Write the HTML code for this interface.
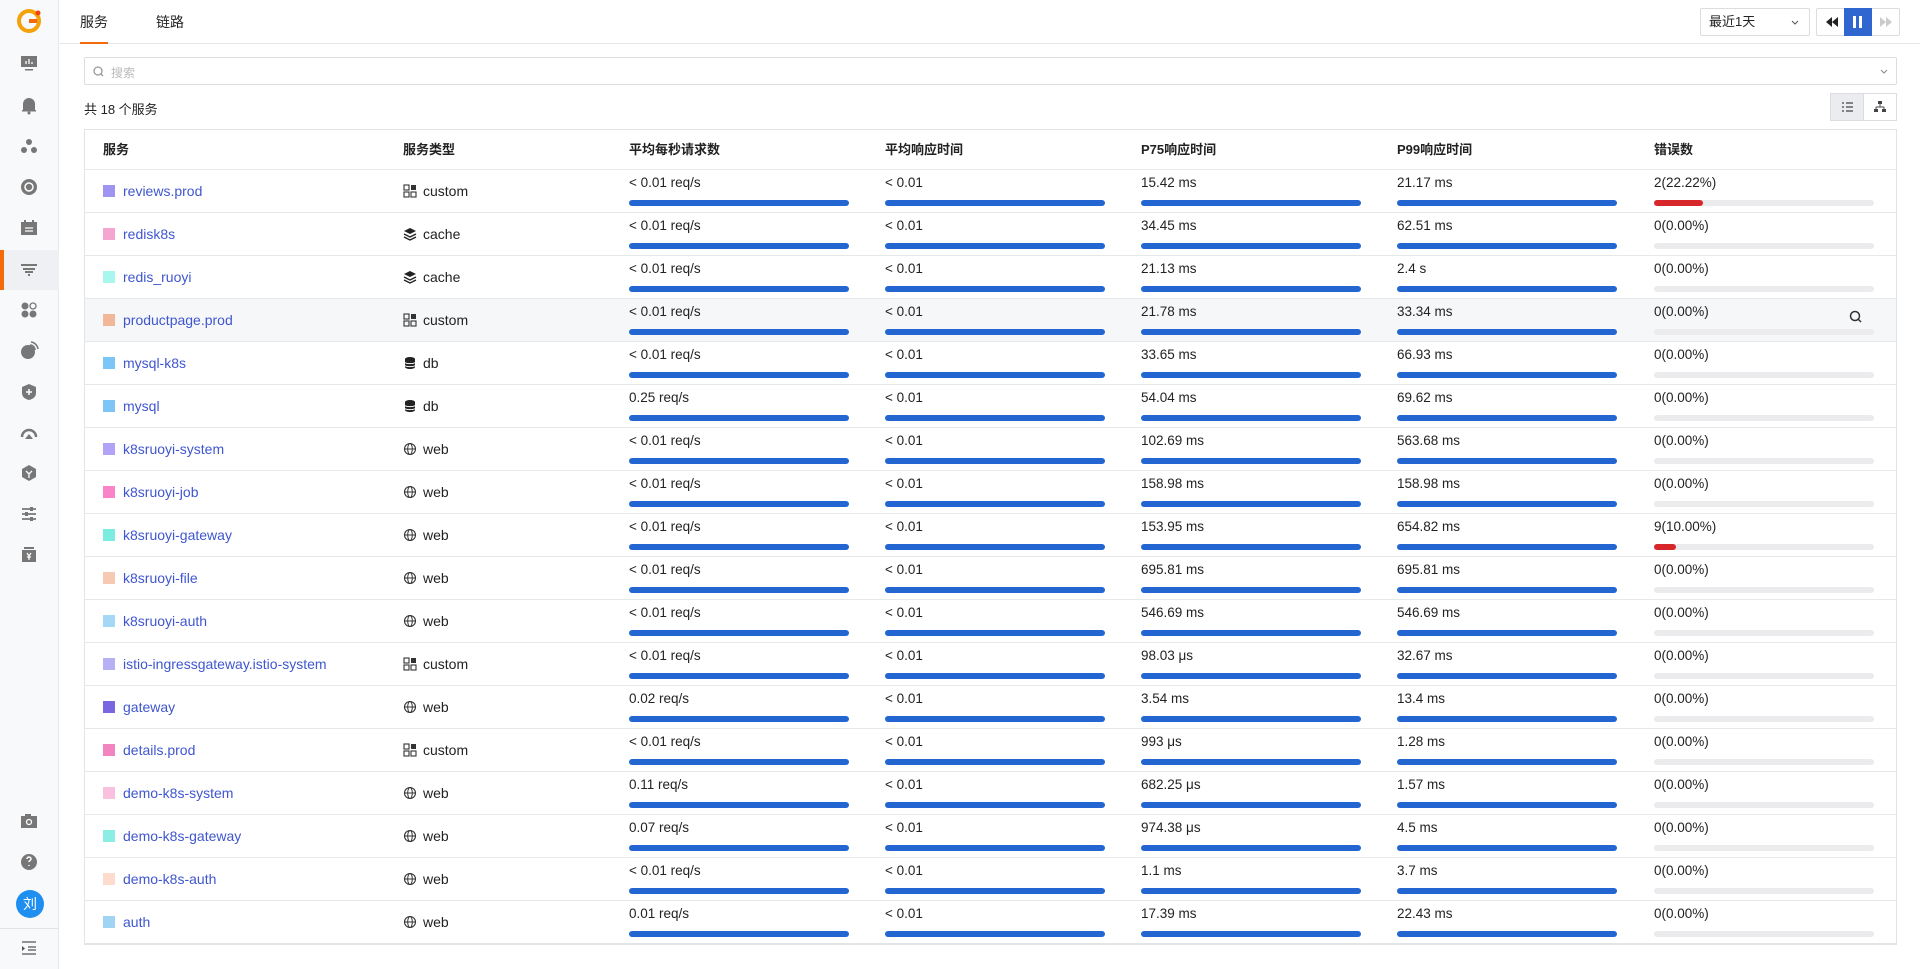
<!DOCTYPE html>
<html><head><meta charset="utf-8"><style>
*{box-sizing:border-box;margin:0;padding:0}
body{width:1920px;height:969px;overflow:hidden;background:#fff;font-family:"Liberation Sans","Noto Sans CJK SC",sans-serif;font-size:14px;color:#222;position:relative}
.sb{position:absolute;left:0;top:0;width:59px;height:969px;background:#f8f9fb;border-right:1px solid #e6e7ea}
.ic{position:absolute;left:19px;width:20px;height:20px}
.act{position:absolute;left:0;top:250px;width:59px;height:40px;background:#eef0f3}
.act:before{content:"";position:absolute;left:0;top:0;width:4px;height:40px;background:#f46a0a}
.hdr{position:absolute;left:60px;top:0;right:0;height:44px;border-bottom:1px solid #e6e7ea}
.tab{position:absolute;top:12px;font-size:14px}
.ul{position:absolute;left:80px;top:42px;width:28px;height:2px;background:#f46a0a}
.sel{position:absolute;left:1700px;top:8px;width:110px;height:28px;border:1px solid #dcdde0;border-radius:2px;font-size:13px;line-height:26px;padding:0 8px}
.btns{position:absolute;left:1816px;top:8px;width:84px;height:28px;border:1px solid #dcdde0;border-radius:2px}
.search{position:absolute;left:84px;top:57px;width:1813px;height:28px;border:1px solid #dcdde0;border-radius:2px}
.cnt{position:absolute;left:84px;top:99px;font-size:13px}
.vt{position:absolute;left:1830px;top:93px;width:67px;height:28px;border:1px solid #dcdde0}
.tbl{position:absolute;left:84px;top:129px;width:1813px;height:816px;border:1px solid #e3e4e7;border-bottom:2px solid #e3e4e7}
.th{position:relative;height:40px;border-bottom:1px solid #e8e8ea;font-weight:bold;font-size:13px}
.th span{position:absolute;top:9px}
.r{position:relative;height:43px;border-bottom:1px solid #e8e8ea}
.r:last-child{border-bottom:none}
.n{position:absolute;left:18px;top:13px;color:#3f56cf;white-space:nowrap}
.n i{display:inline-block;width:12px;height:12px;vertical-align:-1px;margin-right:8px}
.t{position:absolute;left:318px;top:13px}
.t svg{vertical-align:-2px;margin-right:6px}
.m{position:absolute;top:5px;width:220px}
.m b{display:block;font-weight:normal;height:20px;font-size:13.5px}
.m u{display:block;height:6px;border-radius:3px;background:#2366d1;margin-top:5px}
.e u{background:#ebebee;position:relative}
.e u s{position:absolute;left:0;top:0;height:6px;border-radius:3px;background:#d7272a}
.c1{left:544px}.c2{left:800px}.c3{left:1056px}.c4{left:1312px}.c5{left:1569px}
</style></head><body>
<div class="sb">
<svg class="ic" style="left:17px;top:8px;width:26px;height:26px" viewBox="0 0 26 26"><circle cx="12" cy="13" r="10" fill="none" stroke="#f5a20a" stroke-width="4"/><path d="M12 13h8" stroke="#f46a0a" stroke-width="4"/><circle cx="21" cy="5" r="2.5" fill="#f4400a"/></svg>
<svg class="ic" style="top:53px" viewBox="0 0 20 20"><rect x="2" y="3" width="16" height="11" fill="#777"/><rect x="6" y="16" width="8" height="1.5" fill="#777"/><path d="M7 11V8M10 11V6M13 11V9" stroke="#fff" stroke-width="1.3"/></svg>
<svg class="ic" style="top:95px" viewBox="0 0 20 20"><path d="M4 15V9a6 6 0 0112 0v6zM3 15h14v1.5H3z" fill="#777"/><circle cx="10" cy="18" r="1.5" fill="#777"/></svg>
<svg class="ic" style="top:136px" viewBox="0 0 20 20"><circle cx="10" cy="6" r="3" fill="#777"/><circle cx="5" cy="14" r="3" fill="#777"/><circle cx="15" cy="14" r="3" fill="#777"/></svg>
<svg class="ic" style="top:177px" viewBox="0 0 20 20"><circle cx="10" cy="10" r="8" fill="#777"/><circle cx="10" cy="10" r="4" fill="none" stroke="#fff" stroke-width="1.5"/></svg>
<svg class="ic" style="top:218px" viewBox="0 0 20 20"><rect x="2" y="4" width="16" height="13" fill="#777"/><path d="M6 2v4M14 2v4" stroke="#777" stroke-width="2"/><path d="M6 10h8M6 13h8" stroke="#fff" stroke-width="1.3"/></svg>
<div class="act"></div>
<svg class="ic" style="top:260px" viewBox="0 0 20 20"><path d="M2 5h16M4 9h12M6 12h8M9 15h2" stroke="#666" stroke-width="1.8"/></svg>
<svg class="ic" style="top:300px" viewBox="0 0 20 20"><circle cx="6" cy="6" r="3.5" fill="#777"/><circle cx="14" cy="6" r="3" fill="none" stroke="#777" stroke-width="1.3"/><circle cx="6" cy="14" r="3.5" fill="#777"/><circle cx="14" cy="14" r="3.5" fill="#777"/></svg>
<svg class="ic" style="top:341px" viewBox="0 0 20 20"><circle cx="9" cy="11" r="7" fill="#777"/><path d="M11 4a5 5 0 015 5M12 1a8 8 0 017 7" stroke="#777" fill="none" stroke-width="1.5"/></svg>
<svg class="ic" style="top:382px" viewBox="0 0 20 20"><path d="M10 2l7 3v6c0 4-3 6-7 7-4-1-7-3-7-7V5z" fill="#777"/><path d="M10 7v6M7 10h6" stroke="#fff" stroke-width="1.5"/></svg>
<svg class="ic" style="top:423px" viewBox="0 0 20 20"><path d="M3 14a7 7 0 1114 0" stroke="#777" stroke-width="2.5" fill="none"/><path d="M10 11l4 5H6z" fill="#777"/></svg>
<svg class="ic" style="top:463px" viewBox="0 0 20 20"><path d="M10 2l7 4v8l-7 4-7-4V6z" fill="#777"/><path d="M7 8l3 3 3-3M10 11v4" stroke="#fff" stroke-width="1.3" fill="none"/></svg>
<svg class="ic" style="top:504px" viewBox="0 0 20 20"><path d="M3 5h14M3 10h14M3 15h14" stroke="#777" stroke-width="1.8"/><rect x="11" y="3" width="3" height="4" fill="#777"/><rect x="6" y="8" width="3" height="4" fill="#777"/><rect x="11" y="13" width="3" height="4" fill="#777"/></svg>
<svg class="ic" style="top:545px" viewBox="0 0 20 20"><rect x="3" y="5" width="14" height="12" fill="#777"/><rect x="5" y="2" width="10" height="2" fill="#777"/><path d="M8 8l2 3 2-3M10 11v4M8 12h4" stroke="#fff" stroke-width="1.2" fill="none"/></svg>
<svg class="ic" style="top:811px" viewBox="0 0 20 20"><rect x="2" y="5" width="16" height="12" fill="#777"/><rect x="6" y="3" width="6" height="3" fill="#777"/><circle cx="10" cy="11" r="2.5" fill="none" stroke="#fff" stroke-width="1.3"/></svg>
<svg class="ic" style="top:852px" viewBox="0 0 20 20"><circle cx="10" cy="10" r="8" fill="#777"/><path d="M8 7a2 2 0 114 0c0 1.5-2 1.5-2 3M10 13v1" stroke="#fff" stroke-width="1.5" fill="none"/></svg>
<div style="position:absolute;left:16px;top:890px;width:28px;height:28px;border-radius:50%;background:#1e8ff0;color:#fff;font-size:14px;text-align:center;line-height:28px">刘</div>
<div style="position:absolute;left:0;top:928px;width:59px;border-top:1px solid #e3e4e7"></div>
<svg class="ic" style="top:938px" viewBox="0 0 20 20"><path d="M3 4h14M9 9h8M9 12h8M3 16h14" stroke="#555" stroke-width="1.3"/><path d="M3 8l3 2.5L3 13z" fill="#555"/></svg>
</div>
<div class="hdr"></div>
<div class="tab" style="left:80px">服务</div>
<div class="tab" style="left:156px">链路</div>
<div class="ul"></div>
<div class="sel">最近1天<svg style="position:absolute;right:10px;top:11px" width="8" height="5" viewBox="0 0 8 5"><path d="M1 1l3 3 3-3" stroke="#555" fill="none"/></svg></div>
<div class="btns"><svg style="position:absolute;left:8px;top:8px" width="14" height="10" viewBox="0 0 14 10"><path d="M7 0v10L1 5zM13 0v10L7 5z" fill="#222"/></svg><div style="position:absolute;left:27px;top:-1px;width:28px;height:28px;background:#2f66d0"><div style="position:absolute;left:9px;top:8px;width:3px;height:12px;background:#fff"></div><div style="position:absolute;left:15px;top:8px;width:3px;height:12px;background:#fff"></div></div><svg style="position:absolute;left:62px;top:8px" width="14" height="10" viewBox="0 0 14 10"><path d="M1 0v10l6-5zM7 0v10l6-5z" fill="#ccc"/></svg></div>
<div class="search"><svg style="position:absolute;left:8px;top:8px" width="11" height="11" viewBox="0 0 11 11"><circle cx="5" cy="5" r="4" fill="none" stroke="#999" stroke-width="1.3"/><path d="M8 8l2 2" stroke="#999" stroke-width="1.3"/></svg><span style="position:absolute;left:26px;top:6px;font-size:12px;color:#bbb">搜索</span><svg style="position:absolute;right:8px;top:11px" width="8" height="5" viewBox="0 0 8 5"><path d="M1 1l3 3 3-3" stroke="#888" fill="none"/></svg></div>
<div class="cnt">共 18 个服务</div>
<div class="vt"><div style="position:absolute;left:0;top:0;width:33px;height:26px;background:#ebecef;border-right:1px solid #dcdde0"></div><svg style="position:absolute;left:11px;top:8px" width="11" height="10" viewBox="0 0 11 10"><path d="M0 1h2M4 1h7M0 5h2M4 5h7M0 9h2M4 9h7" stroke="#444" stroke-width="1.2"/></svg><svg style="position:absolute;left:43px;top:7px" width="12" height="11" viewBox="0 0 12 11"><rect x="4" y="0" width="4" height="3" fill="#444"/><path d="M6 3v3M2 6h8M2 6v2M10 6v2" stroke="#444"/><rect x="0" y="8" width="4" height="3" fill="#444"/><rect x="8" y="8" width="4" height="3" fill="#444"/></svg></div>
<svg width="0" height="0" style="position:absolute"><defs>
<g id="cu"><rect x="1" y="1" width="5" height="5" fill="none" stroke="#333" stroke-width="1.1"/><rect x="8" y="1" width="5" height="5" fill="#333"/><rect x="1" y="8" width="5" height="5" fill="none" stroke="#333" stroke-width="1.1"/><rect x="8" y="8" width="5" height="5" fill="none" stroke="#333" stroke-width="1.1"/></g>
<g id="ca"><path d="M7 1l6 3-6 3-6-3z" fill="#222"/><path d="M1 7l6 3 6-3M1 10l6 3 6-3" stroke="#222" stroke-width="1.4" fill="none"/></g>
<g id="db"><ellipse cx="7" cy="3" rx="5" ry="2" fill="#222"/><path d="M2 3v8c0 1 2 2 5 2s5-1 5-2V3" fill="#222"/><path d="M2 6.5c1 1.5 9 1.5 10 0M2 9.5c1 1.5 9 1.5 10 0" stroke="#fff" fill="none"/></g>
<g id="we"><circle cx="7" cy="7" r="5.5" fill="none" stroke="#333" stroke-width="1.1"/><ellipse cx="7" cy="7" rx="2.3" ry="5.5" fill="none" stroke="#333" stroke-width="1"/><path d="M1.5 7h11" stroke="#333"/></g>
</defs></svg>
<div class="tbl">
<div class="th"><span style="left:18px">服务</span><span style="left:318px">服务类型</span><span style="left:544px">平均每秒请求数</span><span style="left:800px">平均响应时间</span><span style="left:1056px">P75响应时间</span><span style="left:1312px">P99响应时间</span><span style="left:1569px">错误数</span></div>
<div class="r"><div class="n"><i style="background:#a094f2"></i>reviews.prod</div><div class="t"><svg width="14" height="14"><use href="#cu"/></svg>custom</div><div class="m c1"><b>&lt; 0.01 req/s</b><u></u></div><div class="m c2"><b>&lt; 0.01</b><u></u></div><div class="m c3"><b>15.42 ms</b><u></u></div><div class="m c4"><b>21.17 ms</b><u></u></div><div class="m c5 e"><b>2(22.22%)</b><u><s style="width:49px"></s></u></div></div>
<div class="r"><div class="n"><i style="background:#f2a6d0"></i>redisk8s</div><div class="t"><svg width="14" height="14"><use href="#ca"/></svg>cache</div><div class="m c1"><b>&lt; 0.01 req/s</b><u></u></div><div class="m c2"><b>&lt; 0.01</b><u></u></div><div class="m c3"><b>34.45 ms</b><u></u></div><div class="m c4"><b>62.51 ms</b><u></u></div><div class="m c5 e"><b>0(0.00%)</b><u></u></div></div>
<div class="r"><div class="n"><i style="background:#a8f7ef"></i>redis_ruoyi</div><div class="t"><svg width="14" height="14"><use href="#ca"/></svg>cache</div><div class="m c1"><b>&lt; 0.01 req/s</b><u></u></div><div class="m c2"><b>&lt; 0.01</b><u></u></div><div class="m c3"><b>21.13 ms</b><u></u></div><div class="m c4"><b>2.4 s</b><u></u></div><div class="m c5 e"><b>0(0.00%)</b><u></u></div></div>
<div class="r" style="background:#f6f7f9"><div class="n"><i style="background:#f2b699"></i>productpage.prod</div><div class="t"><svg width="14" height="14"><use href="#cu"/></svg>custom</div><div class="m c1"><b>&lt; 0.01 req/s</b><u></u></div><div class="m c2"><b>&lt; 0.01</b><u></u></div><div class="m c3"><b>21.78 ms</b><u></u></div><div class="m c4"><b>33.34 ms</b><u></u></div><div class="m c5 e"><b>0(0.00%)</b><u></u></div><svg style="position:absolute;left:1764px;top:11px" width="14" height="14" viewBox="0 0 14 14"><circle cx="6" cy="6" r="4.5" fill="none" stroke="#333" stroke-width="1.5"/><path d="M9.5 9.5l2.5 2.5" stroke="#333" stroke-width="1.5"/></svg></div>
<div class="r"><div class="n"><i style="background:#7cc5f7"></i>mysql-k8s</div><div class="t"><svg width="14" height="14"><use href="#db"/></svg>db</div><div class="m c1"><b>&lt; 0.01 req/s</b><u></u></div><div class="m c2"><b>&lt; 0.01</b><u></u></div><div class="m c3"><b>33.65 ms</b><u></u></div><div class="m c4"><b>66.93 ms</b><u></u></div><div class="m c5 e"><b>0(0.00%)</b><u></u></div></div>
<div class="r"><div class="n"><i style="background:#7cc5f7"></i>mysql</div><div class="t"><svg width="14" height="14"><use href="#db"/></svg>db</div><div class="m c1"><b>0.25 req/s</b><u></u></div><div class="m c2"><b>&lt; 0.01</b><u></u></div><div class="m c3"><b>54.04 ms</b><u></u></div><div class="m c4"><b>69.62 ms</b><u></u></div><div class="m c5 e"><b>0(0.00%)</b><u></u></div></div>
<div class="r"><div class="n"><i style="background:#b3a3f7"></i>k8sruoyi-system</div><div class="t"><svg width="14" height="14"><use href="#we"/></svg>web</div><div class="m c1"><b>&lt; 0.01 req/s</b><u></u></div><div class="m c2"><b>&lt; 0.01</b><u></u></div><div class="m c3"><b>102.69 ms</b><u></u></div><div class="m c4"><b>563.68 ms</b><u></u></div><div class="m c5 e"><b>0(0.00%)</b><u></u></div></div>
<div class="r"><div class="n"><i style="background:#f985c8"></i>k8sruoyi-job</div><div class="t"><svg width="14" height="14"><use href="#we"/></svg>web</div><div class="m c1"><b>&lt; 0.01 req/s</b><u></u></div><div class="m c2"><b>&lt; 0.01</b><u></u></div><div class="m c3"><b>158.98 ms</b><u></u></div><div class="m c4"><b>158.98 ms</b><u></u></div><div class="m c5 e"><b>0(0.00%)</b><u></u></div></div>
<div class="r"><div class="n"><i style="background:#7aede0"></i>k8sruoyi-gateway</div><div class="t"><svg width="14" height="14"><use href="#we"/></svg>web</div><div class="m c1"><b>&lt; 0.01 req/s</b><u></u></div><div class="m c2"><b>&lt; 0.01</b><u></u></div><div class="m c3"><b>153.95 ms</b><u></u></div><div class="m c4"><b>654.82 ms</b><u></u></div><div class="m c5 e"><b>9(10.00%)</b><u><s style="width:22px"></s></u></div></div>
<div class="r"><div class="n"><i style="background:#f7c9b3"></i>k8sruoyi-file</div><div class="t"><svg width="14" height="14"><use href="#we"/></svg>web</div><div class="m c1"><b>&lt; 0.01 req/s</b><u></u></div><div class="m c2"><b>&lt; 0.01</b><u></u></div><div class="m c3"><b>695.81 ms</b><u></u></div><div class="m c4"><b>695.81 ms</b><u></u></div><div class="m c5 e"><b>0(0.00%)</b><u></u></div></div>
<div class="r"><div class="n"><i style="background:#a5d8f7"></i>k8sruoyi-auth</div><div class="t"><svg width="14" height="14"><use href="#we"/></svg>web</div><div class="m c1"><b>&lt; 0.01 req/s</b><u></u></div><div class="m c2"><b>&lt; 0.01</b><u></u></div><div class="m c3"><b>546.69 ms</b><u></u></div><div class="m c4"><b>546.69 ms</b><u></u></div><div class="m c5 e"><b>0(0.00%)</b><u></u></div></div>
<div class="r"><div class="n"><i style="background:#b8b0f5"></i>istio-ingressgateway.istio-system</div><div class="t"><svg width="14" height="14"><use href="#cu"/></svg>custom</div><div class="m c1"><b>&lt; 0.01 req/s</b><u></u></div><div class="m c2"><b>&lt; 0.01</b><u></u></div><div class="m c3"><b>98.03 μs</b><u></u></div><div class="m c4"><b>32.67 ms</b><u></u></div><div class="m c5 e"><b>0(0.00%)</b><u></u></div></div>
<div class="r"><div class="n"><i style="background:#7a66e0"></i>gateway</div><div class="t"><svg width="14" height="14"><use href="#we"/></svg>web</div><div class="m c1"><b>0.02 req/s</b><u></u></div><div class="m c2"><b>&lt; 0.01</b><u></u></div><div class="m c3"><b>3.54 ms</b><u></u></div><div class="m c4"><b>13.4 ms</b><u></u></div><div class="m c5 e"><b>0(0.00%)</b><u></u></div></div>
<div class="r"><div class="n"><i style="background:#f285c0"></i>details.prod</div><div class="t"><svg width="14" height="14"><use href="#cu"/></svg>custom</div><div class="m c1"><b>&lt; 0.01 req/s</b><u></u></div><div class="m c2"><b>&lt; 0.01</b><u></u></div><div class="m c3"><b>993 μs</b><u></u></div><div class="m c4"><b>1.28 ms</b><u></u></div><div class="m c5 e"><b>0(0.00%)</b><u></u></div></div>
<div class="r"><div class="n"><i style="background:#f9c0e0"></i>demo-k8s-system</div><div class="t"><svg width="14" height="14"><use href="#we"/></svg>web</div><div class="m c1"><b>0.11 req/s</b><u></u></div><div class="m c2"><b>&lt; 0.01</b><u></u></div><div class="m c3"><b>682.25 μs</b><u></u></div><div class="m c4"><b>1.57 ms</b><u></u></div><div class="m c5 e"><b>0(0.00%)</b><u></u></div></div>
<div class="r"><div class="n"><i style="background:#8aeee4"></i>demo-k8s-gateway</div><div class="t"><svg width="14" height="14"><use href="#we"/></svg>web</div><div class="m c1"><b>0.07 req/s</b><u></u></div><div class="m c2"><b>&lt; 0.01</b><u></u></div><div class="m c3"><b>974.38 μs</b><u></u></div><div class="m c4"><b>4.5 ms</b><u></u></div><div class="m c5 e"><b>0(0.00%)</b><u></u></div></div>
<div class="r"><div class="n"><i style="background:#fddccd"></i>demo-k8s-auth</div><div class="t"><svg width="14" height="14"><use href="#we"/></svg>web</div><div class="m c1"><b>&lt; 0.01 req/s</b><u></u></div><div class="m c2"><b>&lt; 0.01</b><u></u></div><div class="m c3"><b>1.1 ms</b><u></u></div><div class="m c4"><b>3.7 ms</b><u></u></div><div class="m c5 e"><b>0(0.00%)</b><u></u></div></div>
<div class="r"><div class="n"><i style="background:#a0d4f5"></i>auth</div><div class="t"><svg width="14" height="14"><use href="#we"/></svg>web</div><div class="m c1"><b>0.01 req/s</b><u></u></div><div class="m c2"><b>&lt; 0.01</b><u></u></div><div class="m c3"><b>17.39 ms</b><u></u></div><div class="m c4"><b>22.43 ms</b><u></u></div><div class="m c5 e"><b>0(0.00%)</b><u></u></div></div>
</div>
</body></html>
